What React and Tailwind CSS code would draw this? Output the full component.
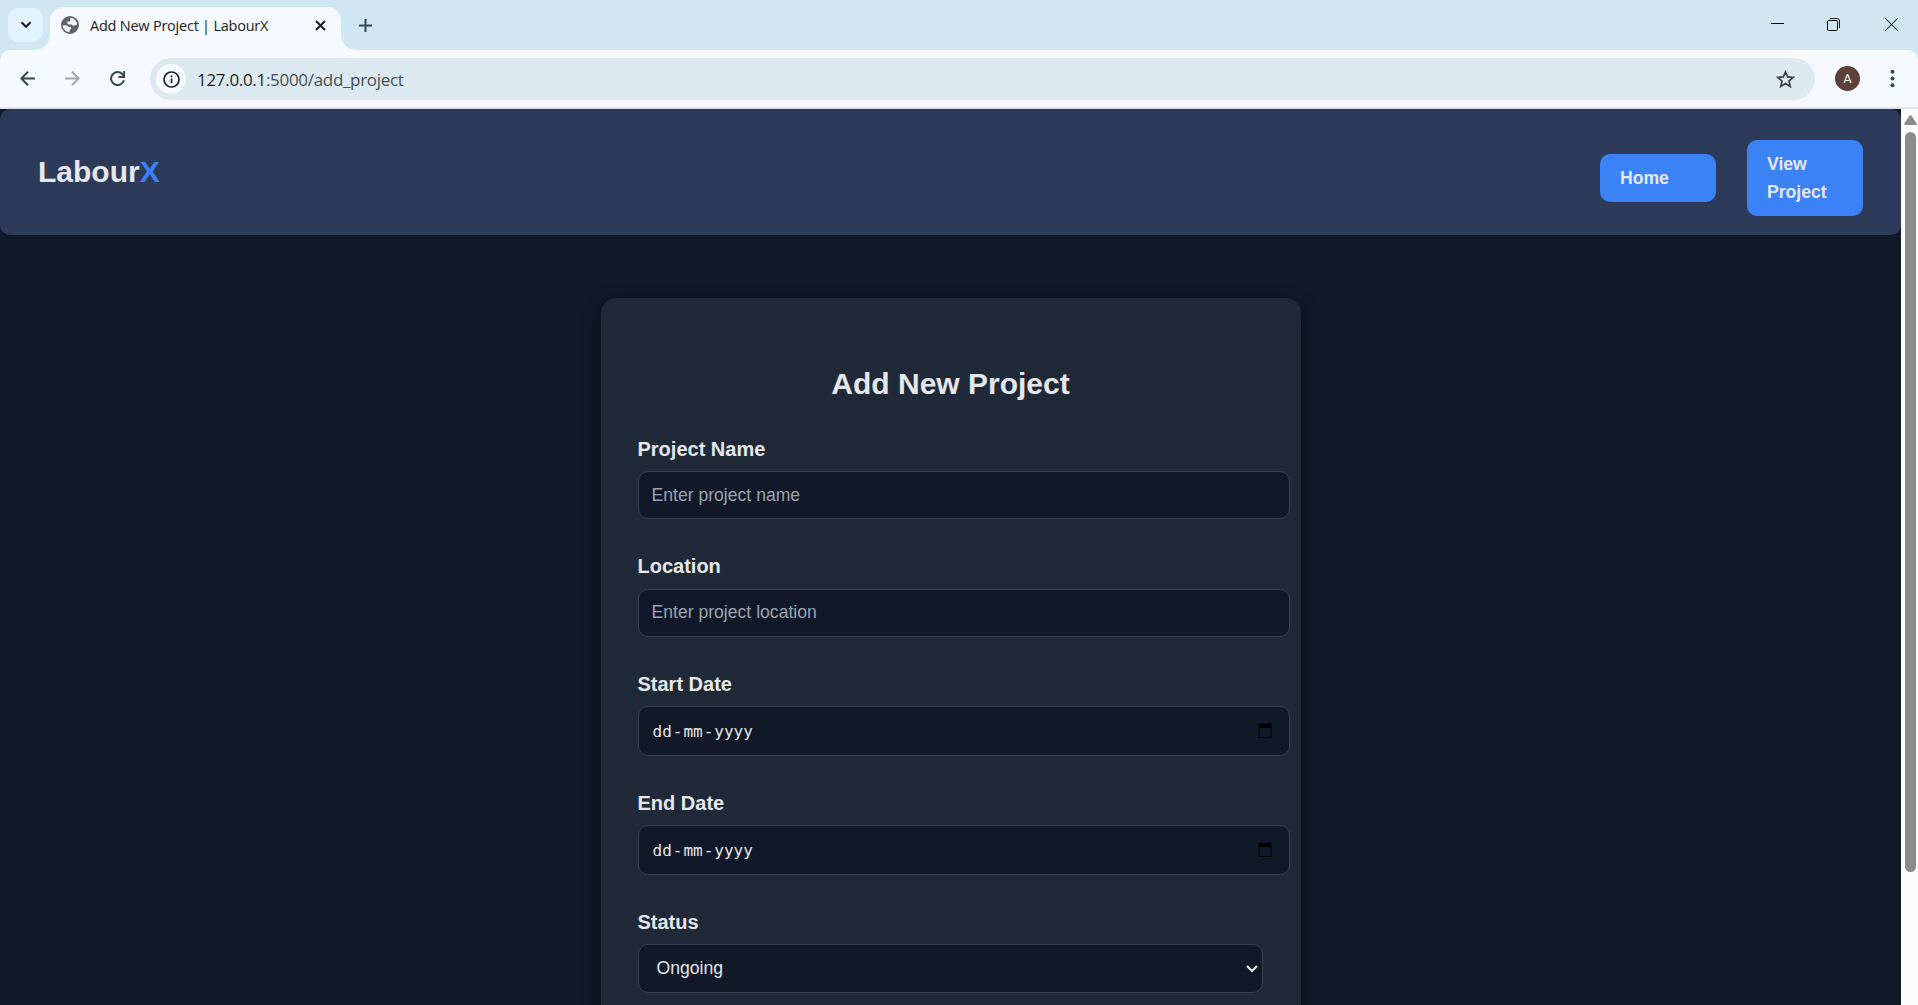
import React from "react";

function TabStrip() {
  return (
    <div className="flex h-[50px] bg-[#d0e6f3]">
      <button className="relative z-10 ml-2 mt-2 flex h-[34px] w-[35px] items-center justify-center rounded-[11px] bg-[#e0f3fe]">
        <svg width="12" height="8" viewBox="0 0 12 8" fill="none" stroke="#1c1f22" strokeWidth="2.2">
          <path d="M1.500 1.200L6 5.700l4.500-4.500" />
        </svg>
      </button>
      <div className="flex w-[7px] items-end justify-end">
        <span className="-ml-2 block h-[15px] w-[15px] shrink-0 bg-[#f6f9fe]">
          <span className="block h-full w-full rounded-br-[15px] bg-[#d0e6f3]" />
        </span>
      </div>
      <div className="mt-[7px] flex h-[43px] w-[291px] items-center rounded-t-[14px] bg-[#f6f9fe] pb-[7px] pl-[11px] pr-[15px]">
        <svg className="shrink-0" width="18" height="18" viewBox="0 0 18 18">
          <circle cx="9" cy="9" r="9" fill="#5f6368" />
          <path
            fill="#f6f9fe"
            d="M9.300 1.700C12.800 1.800 15.800 4.600 16.200 8.200L14 9.600H11.800L10.600 8.500H7.600L6.300 7.200V5.500H8.700L9.300 4.200zM1.700 9.200L6.400 9.500 7.800 10.900H10V13.300L8.500 14V16.200C4.800 16 1.800 13 1.700 9.200z"
          />
        </svg>
        <span className="ml-[11px] whitespace-nowrap pt-[2px] font-['Open_Sans','Noto_Sans',sans-serif] text-[14.5px] leading-5 tracking-[-0.23px] text-[#1e2123]">
          Add New Project | LabourX
        </span>
        <svg className="ml-auto" width="11" height="11" viewBox="0 0 11 11" stroke="#1c1f22" strokeWidth="2">
          <path d="M1 1l9 9M10 1L1 10" />
        </svg>
      </div>
      <div className="flex items-end">
        <span className="block h-[15px] w-[15px] bg-[#f6f9fe]">
          <span className="block h-full w-full rounded-bl-[15px] bg-[#d0e6f3]" />
        </span>
      </div>
      <svg className="ml-[3px] mt-[19px]" width="13" height="13" viewBox="0 0 13 13" stroke="#37474f" strokeWidth="2">
        <path d="M6.500 0v13M0 6.500h13" />
      </svg>
      <div className="ml-auto flex pr-5 pt-[18px]">
        <svg width="13" height="13" viewBox="0 0 13 13" stroke="#000" strokeWidth="1">
          <path d="M0 5.500h13" />
        </svg>
        <svg className="ml-[43px]" width="13" height="13" viewBox="0 0 13 13" fill="none">
          <path d="M3 .5h7a2.500 2.500 0 0 1 2.500 2.500v7" stroke="#222" />
          <rect x=".5" y="2.500" width="10" height="10" rx="1.200" stroke="#000" />
        </svg>
        <svg className="ml-[45px]" width="13" height="13" viewBox="0 0 13 13" stroke="#334" strokeWidth="1.100">
          <path d="M0 0l13 13M13 0L0 13" />
        </svg>
      </div>
    </div>
  );
}

function Toolbar() {
  return (
    <div className="bg-[#d0e6f3]">
      <div className="flex h-[59px] items-start rounded-t-[10px] border-b-2 border-[#dce5ec] bg-[#f6f9fe]">
        <svg className="ml-5 mt-[21px]" width="15" height="15" viewBox="0 0 15 15" fill="none" stroke="#37474f" strokeWidth="2">
          <path d="M15 7.500H1.500M8 .8L1.300 7.500 8 14.200" />
        </svg>
        <svg className="ml-[30px] mt-[21px]" width="15" height="15" viewBox="0 0 15 15" fill="none" stroke="#a4a9ae" strokeWidth="2">
          <path d="M0 7.500h13.500M7 .8l6.700 6.700L7 14.200" />
        </svg>
        <svg className="ml-[30px] mt-[21px]" width="15" height="15" viewBox="0 0 15 15" fill="none" stroke="#37474f" strokeWidth="2">
          <path d="M13.900 9.200A6.500 6.500 0 1 1 12.200 3L13.900 4.800M14.200 0v5.900H8.500" />
        </svg>
        <div className="ml-[25px] mt-2 flex h-[42px] w-[1665px] items-center rounded-full bg-[#dde9f1] pl-[6px] pr-5">
          <span className="flex h-[30px] w-[30px] items-center justify-center rounded-full bg-[#f6f9fe]">
            <svg width="17" height="17" viewBox="0 0 17 17" fill="none" stroke="#1f2326" strokeWidth="1.700">
              <circle cx="8.500" cy="8.500" r="7.500" />
              <path d="M8.500 7.600v4.600M8.500 4.500v1.700" />
            </svg>
          </span>
          <span className="ml-[11px] whitespace-nowrap pt-[2px] font-['Open_Sans','Noto_Sans',sans-serif] text-[17px] leading-6 tracking-[-0.31px] text-[#474e53]">
            <span className="text-[#1b1e20]">127.0.0.1</span>:5000/add_project
          </span>
          <svg className="ml-auto" width="19" height="18" viewBox="0 0 19 18" fill="none" stroke="#3c4246" strokeWidth="1.700">
            <path d="M9.500 1.800l2.200 5.100 5.500.5-4.200 3.700 1.300 5.400-4.800-2.900-4.800 2.900L6 11.100 1.800 7.400l5.500-.5z" />
          </svg>
        </div>
        <span className="ml-5 mt-4 flex h-[25px] w-[25px] items-center justify-center rounded-full bg-[#5d4037] font-[Roboto,sans-serif] text-[13px] text-white">
          A
        </span>
        <svg className="ml-[30px] mt-[19px]" width="5" height="19" viewBox="0 0 5 19" fill="#37474f">
          <circle cx="2.500" cy="2.700" r="2" />
          <circle cx="2.500" cy="9.500" r="2" />
          <circle cx="2.500" cy="16.300" r="2" />
        </svg>
      </div>
    </div>
  );
}

function SiteHeader() {
  const link = "w-[116px] rounded-[10px] bg-[#3b82f6] px-5 py-[10px] text-[17.6px] font-bold leading-[28px] text-[#e5e7eb]";
  return (
    <header className="flex h-[126px] shrink-0 items-center justify-between rounded-[10px] bg-[#2d3a5a] px-[38px]">
      <h1 className="mb-[1px] text-[30px] font-bold leading-[48px] text-[#e5e7eb]">
        Labour<span className="text-[#3b82f6]">X</span>
      </h1>
      <nav className="flex items-center gap-[31px] pt-[12px]">
        <a className={link}>Home</a>
        <a className={link}>View Project</a>
      </nav>
    </header>
  );
}

function Field({ label, className, children }) {
  return (
    <div className={className}>
      <label className="block text-[20px] font-bold leading-8 text-[#e5e7eb]">{label}</label>
      {children}
    </div>
  );
}

function TextInput({ placeholder, className }) {
  return (
    <input
      className={`block h-12 w-[652px] rounded-[10px] border border-[#374151] bg-[#111827] px-[13px] text-[17.6px] text-[#e5e7eb] placeholder:text-[#9ca3af] ${className}`}
      placeholder={placeholder}
    />
  );
}

function DateInput() {
  return (
    <div className="mt-[6px] flex h-[50px] w-[652px] items-center justify-between rounded-[10px] border border-[#374151] bg-[#111827] pl-[13px] pr-[17px] text-[#e5e7eb]">
      <span className="flex pt-[2px] font-['DejaVu_Sans_Mono',monospace] text-[16px] leading-5">
        <span className="px-[1px]">dd</span>
        <span>-</span>
        <span className="px-[1px]">mm</span>
        <span>-</span>
        <span className="px-[1px]">yyyy</span>
      </span>
      <svg className="-mt-[2px]" width="14" height="15" viewBox="0 0 14 15" fill="#000">
        <path fillRule="evenodd" d="M.5 1H2V0h1.500v1h7V0H12v1h1.500v14H.5zM1.500 5v9h11V5z" />
      </svg>
    </div>
  );
}

function SelectInput() {
  return (
    <div className="mt-[6px] flex h-[49px] w-[625px] items-center justify-between rounded-[10px] border border-[#374151] bg-[#111827] pl-[18px] pr-1 text-[17.6px] text-[#e5e7eb]">
      <span>Ongoing</span>
      <svg width="12" height="8" viewBox="0 0 12 8" fill="none" stroke="#e5e7eb" strokeWidth="2.200">
        <path d="M1 1l5 5 5-5" />
      </svg>
    </div>
  );
}

function Scrollbar() {
  return (
    <div className="flex w-[17px] shrink-0 flex-col items-center bg-[#fcfcfc] pl-[2px] pt-[6px]">
      <svg width="13" height="10" viewBox="0 0 13 10" fill="#8b8b8b">
        <path d="M5.500.8Q6.500-.4 7.500.8L12.700 8.500Q13 10 12 10H1Q0 10 .3 8.500z" />
      </svg>
      <div className="mt-[7px] h-[740px] w-[11px] rounded-full bg-[#8b8b8b]" />
    </div>
  );
}

export default function App() {
  return (
    <div className="flex h-[1005px] w-[1918px] flex-col overflow-hidden font-['Liberation_Sans',Arial,sans-serif]">
      <TabStrip />
      <Toolbar />
      <div className="flex min-h-0 flex-1">
        <main className="flex min-w-0 flex-1 flex-col overflow-hidden bg-[#111827]">
          <SiteHeader />
          <section className="mx-auto mt-[63px] h-[900px] w-[700px] shrink-0 rounded-[15px] bg-[#1f2937] px-[37px] pt-[62px] shadow-[0_5px_18px_rgba(0,0,0,0.4)]">
            <h2 className="text-center text-[30px] font-bold leading-[48px] text-[#e5e7eb]">Add New Project</h2>
            <Field label="Project Name" className="mt-[25px]">
              <TextInput placeholder="Enter project name" className="mt-[6px]" />
            </Field>
            <Field label="Location" className="mt-[31px]">
              <TextInput placeholder="Enter project location" className="mt-[7px] pb-[2px]" />
            </Field>
            <Field label="Start Date" className="mt-[31px]">
              <DateInput />
            </Field>
            <Field label="End Date" className="mt-[31px]">
              <DateInput />
            </Field>
            <Field label="Status" className="mt-[31px]">
              <SelectInput />
            </Field>
          </section>
        </main>
        <Scrollbar />
      </div>
    </div>
  );
}
